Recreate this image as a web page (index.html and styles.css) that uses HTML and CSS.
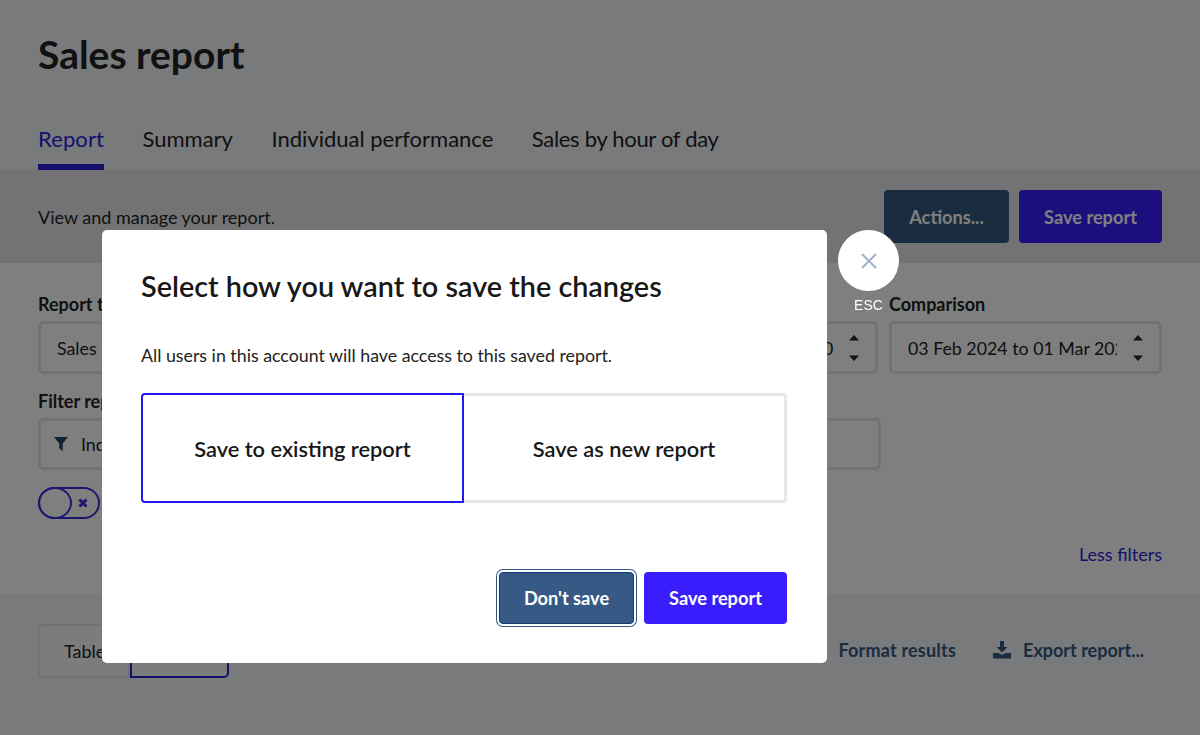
FILE: index.html
```html
<!DOCTYPE html>
<html lang="en">
<head>
<meta charset="utf-8">
<title>Sales report</title>
<link rel="stylesheet" href="styles.css">
</head>
<body>
<header class="page-head">
  <h1 class="page-title">Sales report</h1>
  <nav class="tabs">
    <a class="tab tab-active">Report</a>
    <a class="tab">Summary</a>
    <a class="tab">Individual performance</a>
    <a class="tab tab-tight">Sales by hour of day</a>
  </nav>
</header>
<section class="band">
  <p class="band-text">View and manage your report.</p>
  <div class="band-actions">
    <button class="btn btn-navy">Actions...</button>
    <button class="btn btn-blue">Save report</button>
  </div>
</section>
<section class="filters">
  <div class="field-row">
    <div class="field field-type">
      <label class="field-label">Report type</label>
      <div class="select"><span class="select-text">Sales report</span></div>
    </div>
    <div class="field field-date">
      <label class="field-label">Date range</label>
      <div class="select"><span class="select-text">02 Mar 2024 to 29 Mar 2024</span>
        <svg class="updown" viewBox="0 0 10 26"><path d="M5 0l5 5.500H0zM5 26L0 20.500h10z"/></svg></div>
    </div>
    <div class="field field-compare">
      <label class="field-label">Comparison</label>
      <div class="select"><span class="select-text">03 Feb 2024 to 01 Mar 2024</span>
        <svg class="updown" viewBox="0 0 10 26"><path d="M5 0l5 5.500H0zM5 26L0 20.500h10z"/></svg></div>
    </div>
  </div>
  <div class="field field-filter">
    <label class="field-label">Filter report</label>
    <div class="select select-filter">
      <svg class="funnel" viewBox="0 0 14 14"><path d="M0 0h14L8.700 6.500V14L5.300 11.500V6.500z"/></svg>
      <span class="select-text">Individual</span>
    </div>
  </div>
  <div class="switch"><span class="switch-knob"></span>
    <svg class="switch-x" viewBox="0 0 10 10"><path d="M1.500 1.500l7 7M8.500 1.500l-7 7"/></svg></div>
  <div class="less-row"><a class="less-link">Less filters</a></div>
</section>
<section class="results">
  <div class="view-toggle">
    <span class="view view-table">Table</span>
    <span class="view view-chart">Chart</span>
  </div>
  <div class="result-actions">
    <a class="result-link result-format">Format results</a>
    <a class="result-link">
      <svg class="export-icon" viewBox="0 0 18 18"><path d="M7 0h4v6h3.500L9 11.500 3.500 6H7zM0 12h5.500L9 14l3.500-2H18v5.500H0z"/></svg>
      Export report...
    </a>
  </div>
</section>

<div class="overlay"></div>
<div class="dialog-layer">
  <div class="dialog">
    <h2 class="dialog-title">Select how you want to save the changes</h2>
    <p class="dialog-text">All users in this account will have access to this saved report.</p>
    <div class="choice">
      <div class="choice-item choice-on">Save to existing report</div>
      <div class="choice-item choice-off">Save as new report</div>
    </div>
    <div class="dialog-foot">
      <button class="btn btn-dont">Don't save</button>
      <button class="btn btn-save">Save report</button>
    </div>
  </div>
  <div class="close-wrap">
    <button class="close-btn" aria-label="Close">
      <svg class="close-icon" viewBox="0 0 16 16"><path d="M1 1l14 14M15 1L1 15"/></svg>
    </button>
    <span class="esc">ESC</span>
  </div>
</div>
</body>
</html>
```
FILE: styles.css
```css
* { box-sizing: border-box; }
html, body { height: 100%; }
body {
  margin: 0;
  height: 735px;
  overflow: hidden;
  background: #f2f4f8;
  font-family: Lato, "Liberation Sans", sans-serif;
  color: #1a1a1a;
}
.page-head { height: 170px; padding: 0 38px; display: flex; flex-direction: column; }
.page-title { margin: 31px 0 0; font-size: 39px; line-height: 46px; font-weight: 700; color: #222; }
.tabs { display: flex; gap: 38.500px; margin-top: 49px; }
.tab { font-size: 22px; line-height: 26px; height: 44px; color: #222; }
.tab-tight { letter-spacing: -0.3px; }
.tab-active { color: #2a20d8; border-bottom: 6px solid #2a20d8; letter-spacing: 0.1px; }
.band {
  height: 93px;
  background: #e6e7ea;
  padding: 20px 38px 0;
  display: flex;
  justify-content: space-between;
  align-items: flex-start;
}
.band-text { margin: 17px 0 0; font-size: 18px; line-height: 21px; color: #222; }
.band-actions { display: flex; gap: 10px; }
.btn {
  height: 53px;
  border: 0;
  border-radius: 4px;
  font-family: inherit;
  font-size: 18.200px;
  font-weight: 700;
  color: #fff;
  padding: 0;
}
.btn-navy { width: 125px; background: #35587f; }
.btn-blue { width: 143px; background: #3a1dfc; }
.filters { height: 331px; background: #fff; padding: 31px 38px 0; display: flex; flex-direction: column; }
.field-row { display: flex; gap: 11px; }
.field-label { display: block; font-size: 18px; line-height: 20px; font-weight: 700; color: #222; margin-bottom: 7px; }
.field-type { width: 556px; }
.field-date { width: 273px; }
.field-compare { width: 273px; }
.select {
  height: 53px;
  border: 3px solid #e3e4e8;
  border-radius: 5px;
  padding: 0 16px 0 16px;
  display: flex;
  align-items: center;
  justify-content: space-between;
  gap: 16px;
  background: #fff;
}
.select-text { font-size: 17.800px; white-space: nowrap; overflow: hidden; color: #222; flex: 1; }
.updown { width: 10px; height: 26px; flex: none; fill: #222; }
.field-filter { width: 843px; margin-top: 17px; }
.select-filter { justify-content: flex-start; gap: 13px; padding-left: 13px; height: 52px; }
.funnel { width: 14px; height: 14px; fill: #24466c; flex: none; }
.switch {
  width: 62px; height: 32px; margin-top: 17px;
  border: 2px solid #3a2ee0;
  border-radius: 16px;
  display: flex; align-items: center; justify-content: flex-end;
  padding-right: 10px;
  position: relative;
}
.switch-knob { position: absolute; left: -2px; top: -2px; width: 34px; height: 32px; border: 2px solid #3a2ee0; border-radius: 50%; }
.switch-x { width: 10px; height: 10px; stroke: #3a2ee0; stroke-width: 3; fill: none; }
.less-row { display: flex; justify-content: flex-end; margin-top: 24px; }
.less-link { font-size: 18px; line-height: 22px; color: #2a20d8; }
.results { height: 141px; padding: 30px 56px 0 38px; display: flex; justify-content: space-between; }
.view-toggle { display: flex; height: 54px; }
.view { width: 92px; display: flex; align-items: center; font-size: 18px; color: #222; border: 2px solid #e3e4e8; border-radius: 5px 0 0 5px; padding-left: 24px; background: #f9f9fb; }
.view-chart { width: 99px; border: 2px solid #2a20d8; border-radius: 0 5px 5px 0; }
.result-actions { display: flex; gap: 37px; align-items: center; height: 52px; }
.result-link { font-size: 18px; font-weight: 700; color: #35587f; display: flex; align-items: center; gap: 12px; }
.result-format { letter-spacing: 0.2px; }
.export-icon { width: 18px; height: 18px; fill: #35587f; }

.overlay { position: fixed; inset: 0; background: rgba(0, 0, 0, 0.5); }
.dialog-layer { position: fixed; left: 102px; top: 230px; display: flex; gap: 11px; align-items: flex-start; }
.dialog {
  width: 725px; height: 433px;
  background: #fff;
  border-radius: 5px;
  padding: 37px 40px 39px 39px;
  display: flex; flex-direction: column;
}
.dialog-title { margin: 0; font-size: 28.800px; line-height: 38px; font-weight: 600; color: #181818; }
.dialog-text { margin: 39px 0 0; font-size: 17.800px; line-height: 22px; color: #222; }
.choice { display: flex; height: 110px; margin-top: 27px; }
.choice-item { flex: 0 0 323px; display: flex; align-items: center; justify-content: center; font-size: 21.800px; font-weight: 600; color: #181818; }
.choice-on { border: 2px solid #2418f0; border-radius: 4px 0 0 4px; }
.choice-off { border: 3px solid #e6e7eb; border-left: 0; border-radius: 0 4px 4px 0; }
.dialog-foot { display: flex; justify-content: flex-end; gap: 10px; margin-top: auto; }
.btn-dont { width: 135px; height: 52px; background: #365a85; border: 1px solid #123a6c; box-shadow: 0 0 0 2px #fff, 0 0 0 3px #365a85; }
.btn-save { width: 143px; height: 52px; background: #3a1dfc; }
.close-wrap { width: 61px; display: flex; flex-direction: column; align-items: center; gap: 6px; }
.close-btn { width: 61px; height: 61px; border-radius: 50%; border: 0; background: #fff; padding: 0; display: flex; align-items: center; justify-content: center; }
.close-icon { width: 16px; height: 16px; stroke: #9fb0c8; stroke-width: 2; fill: none; }
.esc { font-family: "Liberation Sans", Arial, sans-serif; font-size: 14px; line-height: 16px; color: #fff; }
```
